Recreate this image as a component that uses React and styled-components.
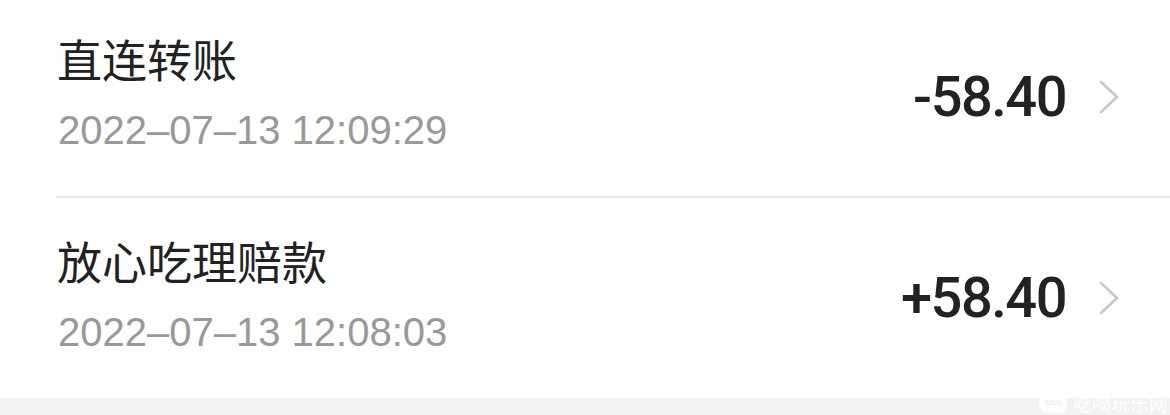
import React from "react";
import styled, { createGlobalStyle } from "styled-components";

const GlobalStyle = createGlobalStyle`
  html, body {
    margin: 0;
    padding: 0;
    background: #f2f2f4;
    overflow: hidden;
  }
  body {
    font-family: "Noto Sans CJK SC", "Noto Sans", sans-serif;
  }
`;

const Page = styled.div`
  position: relative;
  width: 1170px;
  height: 415px;
  overflow: hidden;
  background: #f2f2f4;
`;

const List = styled.div`
  margin-top: -3px;
  background: #fff;
`;

const Row = styled.div`
  display: flex;
  align-items: center;
  justify-content: space-between;
  height: ${(p) => p.height}px;
  padding: 0 50px 0 56px;
  box-sizing: border-box;
`;

const Divider = styled.div`
  height: 2px;
  margin-left: 56px;
  background: #e8e8e8;
`;

const Info = styled.div`
  display: flex;
  flex-direction: column;
  margin-bottom: 8px;
`;

const Title = styled.div`
  font-family: "Noto Sans CJK SC", sans-serif;
  font-size: 45px;
  line-height: 56px;
  color: #222;
  margin-left: 1px;
`;

const Time = styled.div`
  margin-top: 19px;
  font-family: "Liberation Sans", Arial, sans-serif;
  font-size: 40px;
  line-height: 48px;
  color: #999;
  margin-left: 2px;
`;

const Right = styled.div`
  display: flex;
  align-items: center;
  gap: 32px;
`;

const Amount = styled.div`
  font-family: Roboto, "Liberation Sans", sans-serif;
  font-weight: 500;
  font-size: 56px;
  line-height: 60px;
  letter-spacing: -1.5px;
  color: #222;
`;

const Chevron = styled.svg`
  width: 22px;
  height: 36px;
  display: block;
`;

const Watermark = styled.div`
  position: absolute;
  right: 2px;
  bottom: 2px;
  display: flex;
  align-items: center;
  gap: 6px;
  color: rgba(255, 255, 255, 0.95);
  font-family: "Noto Sans CJK SC", sans-serif;
  font-size: 19px;
  line-height: 20px;
`;

const Bubble = styled.div`
  width: 28px;
  height: 20px;
  border-radius: 8px 10px 6px 10px;
  background: rgba(255, 255, 255, 0.95);
  color: #e6e6e8;
  font-size: 8px;
  line-height: 20px;
  text-align: center;
  font-family: "Liberation Sans", sans-serif;
`;

const records = [
  { title: "直连转账", time: "2022–07–13 12:09:29", amount: "-58.40" },
  { title: "放心吃理赔款", time: "2022–07–13 12:08:03", amount: "+58.40" },
];

const Arrow = () => (
  <Chevron viewBox="0 0 22 36">
    <path
      d="M3 3 L19 18 L3 33"
      fill="none"
      stroke="#c8c8cc"
      strokeWidth="2.6"
      strokeLinecap="round"
      strokeLinejoin="round"
    />
  </Chevron>
);

export default function App() {
  return (
    <Page>
      <GlobalStyle />
      <List>
        {records.map((r, i) => (
          <React.Fragment key={r.time}>
            <Row height={i === 0 ? 199 : 200}>
              <Info>
                <Title>{r.title}</Title>
                <Time>{r.time}</Time>
              </Info>
              <Right>
                <Amount>{r.amount}</Amount>
                <Arrow />
              </Right>
            </Row>
            {i < records.length - 1 && <Divider />}
          </React.Fragment>
        ))}
      </List>
      <Watermark>
        <Bubble>52ch</Bubble>
        <span>吃喝玩乐网</span>
      </Watermark>
    </Page>
  );
}
